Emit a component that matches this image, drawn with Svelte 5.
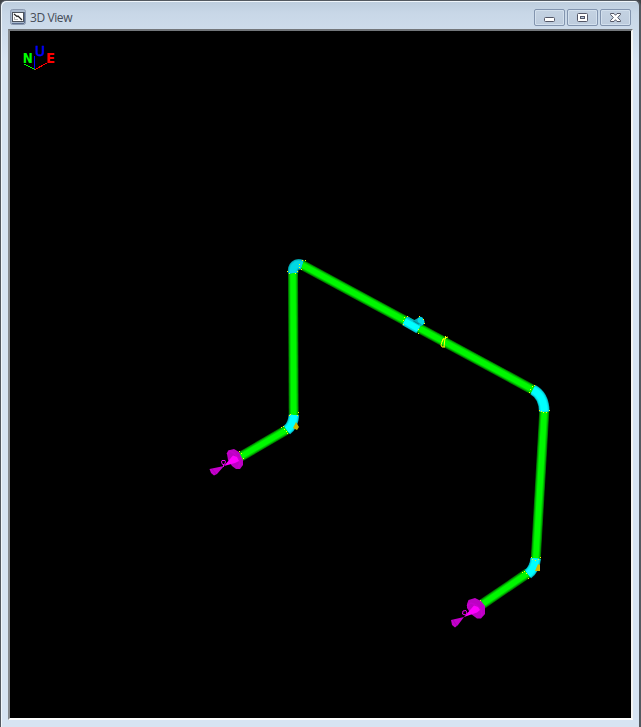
<script>
  const pipes = [
    'M293 272L293.7 415', 'M288 429L240 457', 'M301 264.3L534 390.3',
    'M544.3 411L535.7 560', 'M528 573L481 605'
  ];
  const elbows = [
    'M293.2 273C292.5 266 296 263 302 265',
    'M293.9 415C293.5 422 291 427 287 430',
    'M533 389.8C540 393.5 544 401 544.3 411.5',
    'M535.7 558.5C535 566 532 571 528 574'
  ];
  const greens = [['#006800', 10], ['#009800', 8.8], ['#00cc00', 7.4], ['#00f800', 5.4]];
  const cyans = [['#00a4ac', 10.6], ['#00cbd5', 9.6], ['#00e8f2', 8.4], ['#00ffff', 6.6]];
  const shades = ['#008890', '#00b0ba', '#00c8d2', '#00d8e2'];
  const dots = [
    [287, 271], [289, 273], [295, 273], [297, 271], [299, 264], [299, 267], [301, 269], [302, 260], [305, 260],
    [289, 415], [290, 414], [297, 415], [298, 412], [281, 427], [283, 426], [284, 429], [286, 431], [287, 433],
    [403, 320], [403, 324], [404, 317], [407, 316], [418, 333], [418, 329], [419, 316], [423, 319], [424, 323],
    [530, 389], [529, 392], [532, 386], [534, 385], [539, 410], [541, 411], [543, 412], [546, 412], [549, 410],
    [531, 557], [532, 559], [535, 560], [538, 559], [540, 557], [522, 572], [524, 571], [526, 573], [528, 578],
    [239, 451], [241, 453], [243, 458], [480, 600], [484, 606]
  ];
</script>

<main class="window">
  <header>
    <svg class="app-icon" width="16" height="16" viewBox="0 0 16 16">
      <rect x=".5" y=".5" width="15" height="15" rx="2" fill="#a9b9ce" stroke="#8d9bb1" />
      <path d="M2 14.5H14M14.5 3V14" stroke="#5d6f90" />
      <rect x="2.5" y="3.5" width="11" height="9" fill="#fff" stroke="#4d535d" />
      <path d="M4 5L7 7.5L8 7L12 11" fill="none" stroke="#222" stroke-width="1.2" />
      <path d="M4 10.5h4M4.5 8v3" fill="none" stroke="#b5b5b5" />
    </svg>
    <h1>3D View</h1>
    <div class="controls">
      <button aria-label="Minimize"><svg width="29" height="15"><rect x="9.5" y="7.5" width="10" height="4" rx="1" fill="#fff" stroke="#535666" /></svg></button>
      <button aria-label="Maximize"><svg width="29" height="15"><rect x="9.5" y="3.5" width="10" height="8" rx="1" fill="#fff" stroke="#535666" /><rect x="12.5" y="6.5" width="4" height="2" fill="#b7c9df" stroke="#535666" /></svg></button>
      <button aria-label="Close"><svg width="29" height="15"><path d="M9.5 3.5H13L14.5 5.3L16 3.5H19.5V4.5L16.7 7.5L19.5 10.5V11.5H16L14.5 9.7L13 11.5H9.5V10.5L12.3 7.5L9.5 4.5Z" fill="#fff" stroke="#535666" /></svg></button>
    </div>
  </header>
  <section class="viewport">
    <svg width="621" height="687" viewBox="10 31 621 687">
      <g class="axis">
        <path d="M24 64L35 69.5" stroke="#0f0" />
        <path d="M35 69.5L47 63" stroke="red" />
        <path d="M34.5 56V69" stroke="#00f" />
        <text x="22.8" y="63" fill="#0f0" textLength="10" lengthAdjust="spacingAndGlyphs">N</text>
        <text class="up" x="34.9" y="56" fill="#00f" stroke="#00f" stroke-width=".5" textLength="10" lengthAdjust="spacingAndGlyphs">U</text>
        <text x="46" y="63" fill="red" textLength="9" lengthAdjust="spacingAndGlyphs">E</text>
      </g>
      <g fill="none">
        {#each greens as [color, width]}
          {#each pipes as d}<path {d} stroke={color} stroke-width={width} />{/each}
        {/each}
        {#each cyans as [color, width], level}
          {#each elbows as d, i}<path {d} stroke={i === 0 ? shades[level] : color} stroke-width={width} />{/each}
        {/each}
        <path d="M414 325L421 321.3" stroke="#00a8b2" stroke-width="8.5" />
        <ellipse cx="421" cy="321" rx="3.2" ry="4.2" transform="rotate(-25 421 321)" fill="#00d8e4" />
        <path d="M405 320.7L419 328.7" stroke="#00aebb" stroke-width="10.5" />
        <path d="M404.5 320.8L418.5 328.8" stroke="#00d5df" stroke-width="8.4" />
        <path d="M404.5 321L418.5 329" stroke="#0ff" stroke-width="6" />
        <path d="M413.5 321L419 324.2" stroke="#008b95" stroke-width="1.2" />
        <path d="M445.5 336V339M448 337L445 338L444 347M443 339L441 345L442 347H445M444 338L442 342" stroke="#ff0" stroke-width="1" />
      </g>
      <path d="M296 422L293 428L297 430L299 427Z" fill="#c8b800" />
      <path d="M538 564L535 571H540V565Z" fill="#d0b800" />
      <g fill="#ffff00">
        {#each dots as [x, y]}<rect {x} {y} width="1" height="1" />{/each}
      </g>
      <g>
        <path d="M227 454L228 450.5L234 449L239 452L243 460L243 465L240 469L236 469L232 466L228 460Z" fill="#bd00c4" />
        <path d="M227 454L230 451L234 453L239 459L240 463L238 468" fill="none" stroke="#c600cd" stroke-width="1.5" />
        <path d="M224 466L233 455.5L237 457L239 461L235 463Z" fill="#ff00ff" />
        <path d="M224 466L209.5 469L211 473L214 475.5L217 474Z" fill="#c500cc" />
        <path d="M212 469L216 474" stroke="#aa00b5" />
        <path d="M222 460.5H225L225.5 462L224.5 464.5H222.5L221.5 462ZM223.5 464V467" fill="none" stroke="#e800ed" />
      </g>
      <g>
        <path d="M467 604L468.5 600L475 598L481 601L485 606L485 614L481 618.5L477 618.5L471 614L467 608Z" fill="#bd00c4" />
        <path d="M467 606L471 603L476 605L481 610L482 616" fill="none" stroke="#c600cd" stroke-width="1.5" />
        <path d="M464 617L474 605.5L478 607L480 610L477 612.5Z" fill="#ff00ff" />
        <path d="M464 617L451 620L452 625L455 627.5L458 625Z" fill="#c500cc" />
        <path d="M453 620L457 626" stroke="#aa00b5" />
        <path d="M463 611L466 610.5L467 613L465.5 615L462.5 614Z" fill="none" stroke="#e800ed" />
      </g>
    </svg>
  </section>
</main>

<style>
  :global(body) { margin: 0; background: #404347; }
  .window { box-sizing: border-box; width: 641px; height: 727px; padding: 0 6px 8px 7px; background: linear-gradient(#bdcddd, #c8d7e7 12px, #d7e4f2 60px); border: 1px solid #535960; border-right-width: 2px; border-bottom: 0; border-radius: 6px 6px 0 0; box-shadow: inset 1px 1px #f0f6fb; }
  header { display: flex; align-items: flex-start; height: 28px; }
  .app-icon { margin: 8px 0 0 2px; }
  h1 { margin: 8px 0 0 4px; font: 400 12px/17px "Open Sans", "Noto Sans", sans-serif; letter-spacing: -.4px; color: #454d58; }
  .controls { display: flex; gap: 2px; margin: 8px 2px 0 auto; }
  button { display: block; box-sizing: border-box; width: 31px; height: 17px; padding: 0; border: 1px solid #8294ae; border-radius: 2px; background: linear-gradient(#c4d2e2, #bdccdd); box-shadow: inset 0 0 0 1px #d3e0ed; }
  button svg { display: block; }
  .viewport { box-sizing: border-box; width: 625px; height: 691px; border: 2px solid; border-color: #73777b #f5f5f3 #fff #85898d; background: #000; overflow: hidden; }
  .viewport svg { display: block; }
  .axis { fill: none; shape-rendering: crispEdges; font: bold 13.5px "DejaVu Sans", sans-serif; }
  .up { font-weight: 400; }
</style>
